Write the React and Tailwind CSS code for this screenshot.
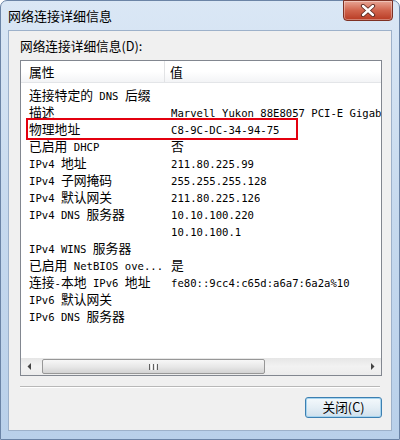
import React from "react";

const rows = [
  ["连接特定的 DNS 后缀", ""],
  ["描述", "Marvell Yukon 88E8057 PCI-E Gigabit Ethernet Controller"],
  ["物理地址", "C8-9C-DC-34-94-75"],
  ["已启用 DHCP", "否"],
  ["IPv4 地址", "211.80.225.99"],
  ["IPv4 子网掩码", "255.255.255.128"],
  ["IPv4 默认网关", "211.80.225.126"],
  ["IPv4 DNS 服务器", "10.10.100.220"],
  ["", "10.10.100.1"],
  ["IPv4 WINS 服务器", ""],
  ["已启用 NetBIOS ove...", "是"],
  ["连接-本地 IPv6 地址", "fe80::9cc4:c65d:a6a7:6a2a%10"],
  ["IPv6 默认网关", ""],
  ["IPv6 DNS 服务器", ""],
];

function Mixed({ text }) {
  const parts = text.split(/([\u3000-\u303f\u4e00-\u9fff]+)/).filter((p) => p !== "");
  return (
    <>
      {parts.map((p, i) =>
        /[\u3000-\u303f\u4e00-\u9fff]/.test(p) ? (
          <span key={i} className="font-['Noto_Sans_CJK_SC',sans-serif] text-[12.8px]">
            {p}
          </span>
        ) : (
          <span key={i} className="font-['DejaVu_Sans_Mono',monospace] text-[10.6px] whitespace-pre">
            {p}
          </span>
        )
      )}
    </>
  );
}

export default function App() {
  return (
    <div className="w-[400px] h-[440px] bg-white">
      <div className="w-full h-full rounded-t-[7px] border border-[#6b84a6] bg-gradient-to-b from-[#dae7f5] via-[#c6d9ee] to-[#b9d0ea] flex flex-col">
        {/* title bar */}
        <div className="h-[29px] relative flex items-center pl-[7px] shrink-0">
          <span className="font-['Noto_Sans_CJK_SC',sans-serif] text-[13px] text-black leading-none">
            网络连接详细信息
          </span>
          <div className="absolute right-[6px] top-[-1px] w-[50px] h-[21px] rounded-b-[4px] border border-[#7e3124] bg-gradient-to-b from-[#e7a595] via-[#d0634c] to-[#b83a22] flex items-center justify-center shadow-[inset_0_0_0_1px_rgba(255,255,255,0.35)]">
            <svg width="16" height="13" viewBox="0 0 16 13">
              <path d="M3 2 L13 11 M13 2 L3 11" stroke="#5a2a22" strokeWidth="4.2" strokeLinecap="round" />
              <path d="M3 2 L13 11 M13 2 L3 11" stroke="#ffffff" strokeWidth="2.4" strokeLinecap="round" />
            </svg>
          </div>
        </div>

        {/* client area */}
        <div className="mx-[7px] mb-[8px] flex-1 border border-[#9db1ca] bg-[#f0f0f0] flex flex-col">
          <div className="mt-[7px] ml-[11px] h-[16px] flex items-center font-['Noto_Sans_CJK_SC',sans-serif] text-[12.7px] text-black leading-none">
            网络连接详细信息(D):
          </div>

          {/* list box */}
          <div className="relative mt-[6px] ml-[11px] w-[362px] h-[316px] border border-[#828790] bg-white flex flex-col overflow-hidden">
            {/* header */}
            <div className="h-[22px] shrink-0 flex bg-gradient-to-b from-white via-white to-[#f3f4f6] border-b border-[#e3e5e8] font-['Noto_Sans_CJK_SC',sans-serif] text-[12.8px] text-black">
              <div className="w-[144px] pl-[8px] flex items-center border-r border-[#e2e3e5]">属性</div>
              <div className="pl-[5px] flex items-center">值</div>
            </div>

            {/* rows */}
            <div className="pt-[3px] flex flex-col">
              {rows.map(([k, v], i) => (
                <div key={i} className="h-[17px] flex leading-[17px] text-black whitespace-nowrap">
                  <div className="w-[150px] pl-[8px] shrink-0 overflow-hidden">
                    <Mixed text={k} />
                  </div>
                  <div className="overflow-hidden">
                    <Mixed text={v} />
                  </div>
                </div>
              ))}
            </div>

            {/* horizontal scrollbar */}
            <div className="mt-auto h-[17px] shrink-0 flex items-center bg-gradient-to-b from-[#e6e6e6] via-[#f2f2f2] to-[#ececec]">
              <div className="w-[17px] h-full flex items-center justify-center">
                <svg width="5" height="7" viewBox="0 0 5 7">
                  <path d="M4 0 L0.5 3.5 L4 7 Z" fill="#444" />
                </svg>
              </div>
              <div className="flex-1 h-full relative flex items-center">
                <div className="ml-[4px] w-[223px] h-[15px] rounded-[2px] border border-[#979797] bg-gradient-to-b from-[#f7f7f7] via-[#e8e8e8] to-[#d3d3d3] flex items-center justify-center gap-[1px]">
                  <div className="w-[1px] h-[6px] bg-[#606060]" />
                  <div className="w-[1px] h-[6px] bg-white" />
                  <div className="w-[1px] h-[6px] bg-[#606060]" />
                  <div className="w-[1px] h-[6px] bg-white" />
                  <div className="w-[1px] h-[6px] bg-[#606060]" />
                </div>
              </div>
              <div className="w-[17px] h-full flex items-center justify-center">
                <svg width="5" height="7" viewBox="0 0 5 7">
                  <path d="M1 0 L4.5 3.5 L1 7 Z" fill="#444" />
                </svg>
              </div>
            </div>

            {/* red highlight box */}
            <div className="absolute left-[5px] top-[57px] w-[272px] h-[22px] border-2 border-[#e3000f]" />
          </div>

          {/* separator */}
          <div className="mt-[10px] ml-[11px] w-[360px] border-t border-[#b8b8b8] border-b border-b-white" />

          {/* button */}
          <div className="mt-[9px] mr-[9px] flex justify-end">
            <div className="w-[77px] h-[21px] rounded-[3px] border border-[#3c7fb1] bg-gradient-to-b from-[#f4f9fc] via-[#e4eef5] to-[#cfe0ec] shadow-[inset_0_0_0_1px_#a6d4ef] flex items-center justify-center font-['Noto_Sans_CJK_SC',sans-serif] text-[12.7px] text-black leading-none">
              关闭(C)
            </div>
          </div>
        </div>
      </div>
    </div>
  );
}
